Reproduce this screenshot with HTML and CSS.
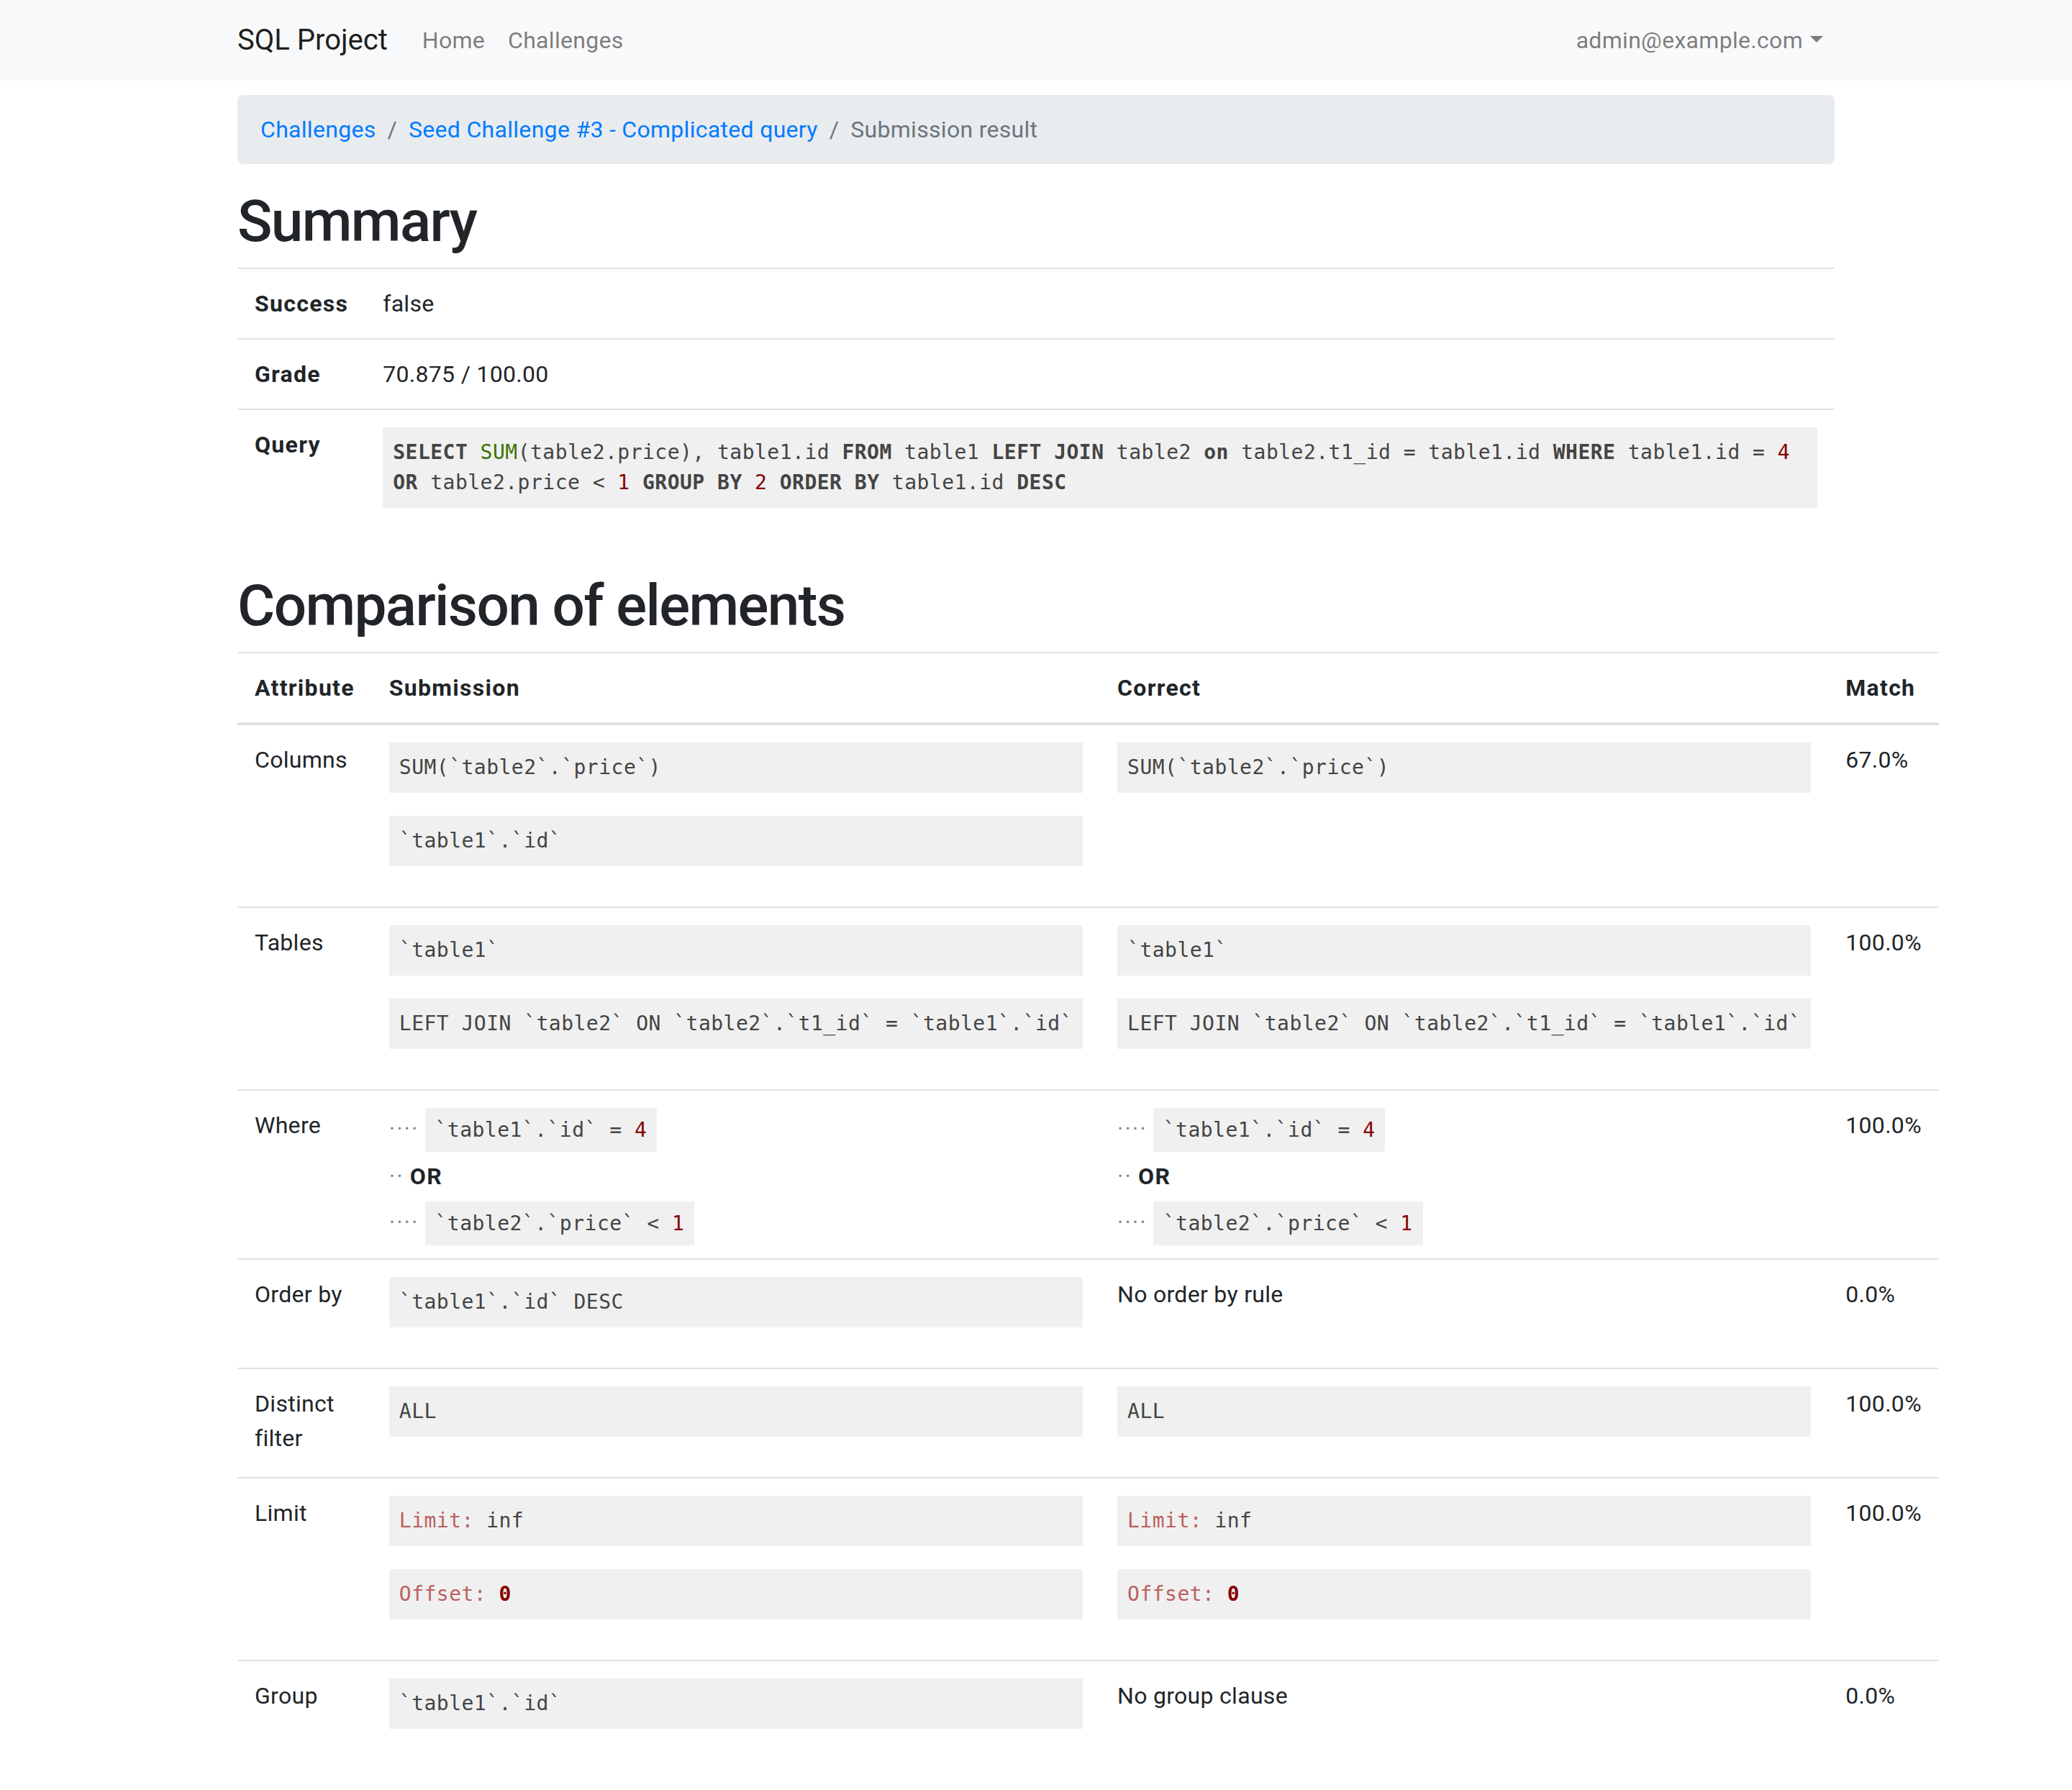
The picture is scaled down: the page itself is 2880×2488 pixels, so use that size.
FILE: index.html
```html
<!DOCTYPE html>
<html lang="en">
<head>
<meta charset="utf-8">
<title>Submission result</title>
<link rel="stylesheet" href="styles.css">
</head>
<body>
<nav class="navbar">
  <div class="container nav-inner">
    <a class="brand" href="#">SQL Project</a>
    <ul class="nav-links nav-main">
      <li><a class="nav-link" href="#">Home</a></li>
      <li><a class="nav-link" href="#">Challenges</a></li>
    </ul>
    <ul class="nav-links">
      <li><a class="nav-link dropdown-toggle" href="#">admin@example.com</a></li>
    </ul>
  </div>
</nav>

<main class="container">
  <ol class="breadcrumb">
    <li class="crumb"><a href="#">Challenges</a></li>
    <li class="crumb"><a href="#">Seed Challenge #3 - Complicated query</a></li>
    <li class="crumb active">Submission result</li>
  </ol>

  <h1 class="title">Summary</h1>
  <table class="table">
    <tbody>
      <tr><th>Success</th><td>false</td></tr>
      <tr><th>Grade</th><td>70.875 / 100.00</td></tr>
      <tr>
        <th>Query</th>
        <td><pre class="code query"><span class="kw">SELECT</span> <span class="fn">SUM</span>(table2.price), table1.id <span class="kw">FROM</span> table1 <span class="kw">LEFT</span> <span class="kw">JOIN</span> table2 <span class="kw">on</span> table2.t1_id = table1.id <span class="kw">WHERE</span> table1.id = <span class="num">4</span> <span class="kw">OR</span> table2.price &lt; <span class="num">1</span> <span class="kw">GROUP</span> <span class="kw">BY</span> <span class="num">2</span> <span class="kw">ORDER</span> <span class="kw">BY</span> table1.id <span class="kw">DESC</span></pre></td>
      </tr>
    </tbody>
  </table>

  <h1 class="title">Comparison of elements</h1>
  <table class="table">
    <thead>
      <tr><th>Attribute</th><th>Submission</th><th>Correct</th><th>Match</th></tr>
    </thead>
    <tbody>
      <tr>
        <td>Columns</td>
        <td><pre class="code">SUM(`table2`.`price`)</pre><pre class="code">`table1`.`id`</pre></td>
        <td><pre class="code">SUM(`table2`.`price`)</pre></td>
        <td>67.0%</td>
      </tr>
      <tr>
        <td>Tables</td>
        <td><pre class="code">`table1`</pre><pre class="code">LEFT JOIN `table2` ON `table2`.`t1_id` = `table1`.`id`</pre></td>
        <td><pre class="code">`table1`</pre><pre class="code">LEFT JOIN `table2` ON `table2`.`t1_id` = `table1`.`id`</pre></td>
        <td>100.0%</td>
      </tr>
      <tr>
        <td>Where</td>
        <td>
          <div class="cond"><span class="dots">····</span> <code class="code-inline">`table1`.`id` = <span class="num">4</span></code></div>
          <div class="cond"><span class="dots">··</span> <span class="op">OR</span></div>
          <div class="cond"><span class="dots">····</span> <code class="code-inline">`table2`.`price` &lt; <span class="num">1</span></code></div>
        </td>
        <td>
          <div class="cond"><span class="dots">····</span> <code class="code-inline">`table1`.`id` = <span class="num">4</span></code></div>
          <div class="cond"><span class="dots">··</span> <span class="op">OR</span></div>
          <div class="cond"><span class="dots">····</span> <code class="code-inline">`table2`.`price` &lt; <span class="num">1</span></code></div>
        </td>
        <td>100.0%</td>
      </tr>
      <tr>
        <td>Order by</td>
        <td><pre class="code">`table1`.`id` DESC</pre></td>
        <td>No order by rule</td>
        <td>0.0%</td>
      </tr>
      <tr>
        <td>Distinct filter</td>
        <td><pre class="code">ALL</pre></td>
        <td><pre class="code">ALL</pre></td>
        <td>100.0%</td>
      </tr>
      <tr>
        <td>Limit</td>
        <td><pre class="code"><span class="var">Limit:</span> inf</pre><pre class="code"><span class="var">Offset:</span> <span class="num strong">0</span></pre></td>
        <td><pre class="code"><span class="var">Limit:</span> inf</pre><pre class="code"><span class="var">Offset:</span> <span class="num strong">0</span></pre></td>
        <td>100.0%</td>
      </tr>
      <tr>
        <td>Group</td>
        <td><pre class="code">`table1`.`id`</pre></td>
        <td>No group clause</td>
        <td>0.0%</td>
      </tr>
    </tbody>
  </table>
</main>
</body>
</html>
```

FILE: styles.css
```css
*,
*::before,
*::after {
  box-sizing: border-box;
}

html {
  font-size: 32px;
}

body {
  margin: 0;
  font-family: Roboto, "Liberation Sans", Arial, sans-serif;
  font-size: 32px;
  line-height: 1.5;
  letter-spacing: 0.3px;
  color: #212529;
  background: #fff;
}

a {
  color: #007bff;
  text-decoration: none;
}

.container {
  width: 100%;
  max-width: 2280px;
  margin: 0 auto;
  padding: 0 30px;
}

/* Navbar */
.navbar {
  background: #f8f9fa;
  padding: 16px 32px;
}

.nav-inner {
  display: flex;
  align-items: center;
}

.brand {
  font-size: 40px;
  line-height: 60px;
  padding: 10px 0;
  margin-right: 32px;
  letter-spacing: 0;
  color: rgba(0, 0, 0, 0.9);
}

.nav-links {
  display: flex;
  list-style: none;
  margin: 0;
  padding: 0;
}

.nav-main {
  margin-right: auto;
}

.nav-link {
  display: block;
  padding: 16px;
  color: rgba(0, 0, 0, 0.5);
}

.dropdown-toggle::after {
  content: "";
  display: inline-block;
  margin-left: 10px;
  vertical-align: 8px;
  border-top: 9.6px solid;
  border-right: 9.6px solid transparent;
  border-left: 9.6px solid transparent;
  border-bottom: 0;
}

/* Breadcrumb */
.breadcrumb {
  display: flex;
  flex-wrap: wrap;
  list-style: none;
  margin: 20px 0 32px;
  padding: 24px 32px;
  background: #e9ecef;
  border-radius: 8px;
}

.crumb + .crumb {
  padding-left: 16px;
}

.crumb + .crumb::before {
  content: "/";
  display: inline-block;
  padding-right: 16px;
  color: #6c757d;
}

.crumb.active {
  color: #6c757d;
}

.crumb-long {
  letter-spacing: 0.6px;
}

/* Headings */
.title {
  margin: 0 0 16px;
  font-size: 80px;
  font-weight: 500;
  line-height: 1.2;
  letter-spacing: -1.6px;
}

/* Tables */
.table {
  width: 100%;
  margin-bottom: 32px;
  border-collapse: collapse;
  color: #212529;
}

.table th,
.table td {
  padding: 24px;
  vertical-align: top;
  text-align: left;
  border-top: 2px solid #dee2e6;
}

.table th {
  font-weight: 700;
  letter-spacing: 1.3px;
}

.table thead th {
  vertical-align: bottom;
  border-bottom: 4px solid #dee2e6;
}

/* Code (highlight.js default look) */
.code {
  display: block;
  margin: 0 0 32px;
  padding: 14px;
  background: #f0f0f0;
  color: #444;
  font-family: "DejaVu Sans Mono", "Liberation Mono", monospace;
  font-size: 28px;
  line-height: 42px;
  letter-spacing: 0.48px;
  white-space: pre;
}

.query {
  white-space: pre-wrap;
}

.code-inline {
  padding: 14px;
  background: #f0f0f0;
  color: #444;
  font-family: "DejaVu Sans Mono", "Liberation Mono", monospace;
  font-size: 28px;
  letter-spacing: 0.48px;
  white-space: pre;
}

.kw {
  font-weight: 700;
}

.fn {
  color: #397300;
}

.num {
  color: #880000;
}

.strong {
  font-weight: 700;
}

.var {
  color: #bc6060;
}

/* Where tree */
.cond {
  line-height: 48px;
}

.cond:first-child {
  margin-top: 5px;
}

.cond + .cond {
  margin-top: 16px;
}

.dots {
  color: #888;
  letter-spacing: 2px;
}

.op {
  font-weight: 700;
  letter-spacing: 1.3px;
}
```
